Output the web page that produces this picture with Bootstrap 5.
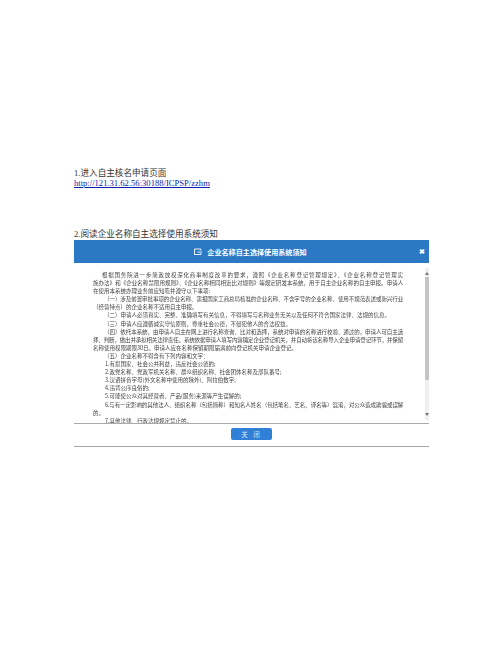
<!DOCTYPE html>
<html lang="zh">
<head>
<meta charset="utf-8">
<title>企业名称自主选择使用系统须知</title>
<link href="https://cdn.jsdelivr.net/npm/bootstrap@5.3.0/dist/css/bootstrap.min.css" rel="stylesheet">
<style>
html,body{background:#fff;height:649px;overflow:hidden}
.sheet{padding:168px 73px 0 74px;font-family:"Liberation Serif","Noto Sans CJK SC",serif;font-size:8.6px;line-height:10px;color:#333}
.sheet a{color:#0b1fa8}
.step-gap{height:41px}
.dlg{margin-top:1px;font-family:"Noto Sans CJK SC",sans-serif}
.dlg-head{height:23px;padding-right:3px;background:#2b78c5;color:#fff;font-size:7.1px;font-weight:700;position:relative}
.dlg-head svg{width:10px;height:8px}
.dlg-x{position:absolute;right:4px;top:6px;font-size:7px;line-height:10px}
.dlg-scroll{height:160px;overflow:hidden}
.dlg-text{width:329px;padding:8px 0 0 19px;font-size:5.5px;line-height:8.1px;color:#444;filter:blur(.25px)}
.dlg-text p{margin:0;white-space:nowrap}
.dlg-text p.jt{white-space:normal;text-align:justify;text-align-last:justify;text-justify:inter-character;height:8.1px}
.dlg-text p.tight{letter-spacing:-.22px}
.dlg-text p.tighter{letter-spacing:-.34px}
.in1{padding-left:9px}
.in2{padding-left:11px}
.in3{padding-left:12px}
.track{width:4px;height:152px;margin-top:5px;background:#efefef}
.arr-up,.arr-down{width:0;height:0;margin:0 auto;border-left:2px solid transparent;border-right:2px solid transparent}
.arr-up{margin-top:4px;margin-bottom:2px;border-bottom:3px solid #777}
.arr-down{margin-top:33px;border-top:3px solid #777}
.thumb{height:103px;background:#c4c4c4}
.dlg-foot{height:22px;border-top:1px solid #aaa;border-bottom:1px solid #a5a5a5;box-sizing:content-box}
.dlg-btn{width:41px;height:12px;margin-bottom:2px;padding:0;border:0;border-radius:2px;background:#2f80d6;color:#d8e9fa;font-size:6.5px;line-height:12px;letter-spacing:2px}
</style>
</head>
<body>
<div class="sheet">
  <div>1.进入自主核名申请页面</div>
  <div><a href="#">http://121.31.62.56:30188/ICPSP/zzhm</a></div>
  <div class="step-gap"></div>
  <div>2.阅读企业名称自主选择使用系统须知</div>
  <div class="dlg">
    <div class="dlg-head d-flex align-items-center justify-content-center gap-1">
      <svg viewBox="0 0 18 16" fill="none" stroke="#fff" stroke-width="1.8"><path d="M15 5V2H2v11h13v-3"/><path d="M8 8h9"/></svg>
      <span>企业名称自主选择使用系统须知</span>
      <span class="dlg-x">✖</span>
    </div>
    <div class="d-flex justify-content-between align-items-start dlg-scroll">
      <div class="dlg-text">
        <p class="in1 jt">根据国务院进一步简政放权深化商事制度改革的要求，遵照《企业名称登记管理规定》、《企业名称登记管理实</p>
        <p class="jt tight">施办法》和《企业名称禁限用规则》、《企业名称相同相近比对规则》等规定研发本系统，用于自主企业名称的自主申报。申请人</p>
        <p>在使用本系统办理业务前应知晓并遵守以下事项:</p>
        <p class="in2 jt tight">（一）涉及前置审批事项的企业名称、需报国家工商总局核准的企业名称、不含字号的企业名称、使用不规范表述或新兴行业</p>
        <p>（经营特点）的企业名称不适用自主申报。</p>
        <p class="in2">（二）申请人必须真实、完整、准确填写有关信息，不得填写与名称业务无关以及任何不符合国家法律、法规的信息。</p>
        <p class="in2">（三）申请人应遵循诚实守信原则，尊重社会公德，不侵犯他人的合法权益。</p>
        <p class="in2 jt tight">（四）依托本系统，由申请人自主在网上进行名称查询、比对和选择，系统对申请的名称进行校验、通过的，申请人可自主选</p>
        <p class="jt tight">择、判断，做出并承担相关法律责任。系统依据申请人填写内容确定企业登记机关，并自动将该名称导入企业申请登记环节，并保留</p>
        <p>名称使用权限期限30日。申请人应在名称保留期限届满前向登记机关申请企业登记。</p>
        <p class="in2">（五）企业名称不得含有下列内容和文字：</p>
        <p class="in3">1.有损国家、社会公共利益，违反社会公德的;</p>
        <p class="in3">2.政党名称、党政军机关名称、群众组织名称、社会团体名称及部队番号;</p>
        <p class="in3">3.汉语拼音字母(外文名称中使用的除外)、阿拉伯数字;</p>
        <p class="in3">4.违背公序良俗的;</p>
        <p class="in3">5.可能使公众对其经营者、产品(服务)来源等产生误解的;</p>
        <p class="in3 jt tighter">6.与有一定影响的其他法人、组织名称（包括简称）和知名人姓名（包括笔名、艺名、译名等）混淆，对公众造成欺骗或误解</p>
        <p>的。</p>
        <p class="in3">7.其他法律、行政法规规定禁止的。</p>
      </div>
      <div class="track">
        <div class="arr-up"></div>
        <div class="thumb"></div>
        <div class="arr-down"></div>
      </div>
    </div>
    <div class="dlg-foot d-flex justify-content-center align-items-center">
      <button type="button" class="btn dlg-btn">关 闭</button>
    </div>
  </div>
</div>
<script src="https://cdn.jsdelivr.net/npm/bootstrap@5.3.0/dist/js/bootstrap.bundle.min.js"></script>
</body>
</html>
